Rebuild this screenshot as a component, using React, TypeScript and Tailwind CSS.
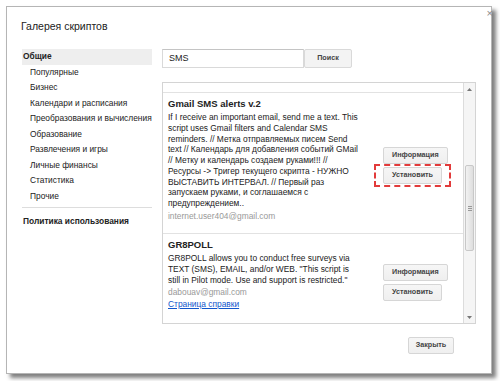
const categories = [
  "Популярные",
  "Бизнес",
  "Календари и расписания",
  "Преобразования и вычисления",
  "Образование",
  "Развлечения и игры",
  "Личные финансы",
  "Статистика",
  "Прочие",
];

const font = "font-['Liberation_Sans',Arial,sans-serif]";

function GrayButton({ label, className = "" }: { label: string; className?: string }) {
  return (
    <div
      className={`h-[17px] px-[8px] flex items-center justify-center rounded-[2px] border border-[#d6d6d6] bg-gradient-to-b from-[#f6f6f6] to-[#efefef] text-[7.2px] font-bold text-[#444] whitespace-nowrap ${className}`}
    >
      {label}
    </div>
  );
}

function Arrow({ down }: { down?: boolean }) {
  return (
    <div className="h-[12px] flex items-center justify-center">
      <svg width="5" height="3" viewBox="0 0 5 3">
        <polygon points={down ? "0,0 5,0 2.5,3" : "0,3 5,3 2.5,0"} fill="#777" />
      </svg>
    </div>
  );
}

export default function App() {
  return (
    <div className={`w-[500px] h-[381px] bg-white overflow-hidden pl-[6px] pt-[6px] ${font} text-[#222]`}>
      <div className="relative w-[486px] h-[368px] bg-white border border-[#b5b5b5] shadow-[4px_4px_4px_rgba(0,0,0,0.5)]">
        <span className="absolute right-[-2px] top-[1px] text-[11px] leading-none text-[#8a8a8a]">×</span>

        <div className="h-[42px] pl-[14px] pt-[13px] text-[10.5px] leading-[12px]">Галерея скриптов</div>

        <div className="flex pl-[15px]">
          {/* sidebar */}
          <div className="w-[130px] text-[8.4px]">
            <div className="h-[15.5px] flex items-center pl-px bg-[#eeeeee] font-bold">Общие</div>
            {categories.map((c) => (
              <div key={c} className="h-[15.5px] flex items-center pl-[8px] whitespace-nowrap">
                {c}
              </div>
            ))}
            <div className="mt-[3px] border-t border-[#dddddd]" />
            <div className="mt-[6px] h-[15.5px] flex items-center pl-px font-bold">Политика использования</div>
          </div>

          {/* main */}
          <div className="ml-[10px] w-[314px]">
            <div className="flex h-[19px]">
              <div className="w-[142px] h-full border border-[#d9d9d9] border-t-[#c4c4c4] flex items-center pl-[6px] text-[9px]">
                SMS
              </div>
              <div className="w-[48px] h-full flex items-center justify-center rounded-[2px] border border-[#d9d9d9] bg-[#f3f3f3] text-[7.2px] font-bold text-[#444]">
                Поиск
              </div>
            </div>

            <div className="mt-[14px] h-[242px] flex border border-[#d4d4d4]">
              <div className="flex-1 overflow-hidden">
                <div className="h-[10px] border-b border-[#e2e2e2]" />

                <div className="flex items-center border-b border-[#e2e2e2]">
                  <div className="w-[220px] pl-[5px] pt-[5px] pb-[11.5px]">
                    <div className="text-[9.5px] font-bold leading-[12px] mb-[2px]">Gmail SMS alerts v.2</div>
                    <div className="text-[8.4px] leading-[10.75px] whitespace-nowrap">
                      If I receive an important email, send me a text. This
                      <br />
                      script uses Gmail filters and Calendar SMS
                      <br />
                      reminders. // Метка отправляемых писем Send
                      <br />
                      text // Календарь для добавления событий GMail
                      <br />
                      // Метку и календарь создаем руками!!! //
                      <br />
                      Ресурсы -&gt; Тригер текущего скрипта - НУЖНО
                      <br />
                      ВЫСТАВИТЬ ИНТЕРВАЛ. // Первый раз
                      <br />
                      запускаем руками, и соглашаемся с
                      <br />
                      предупреждением..
                    </div>
                    <div className="mt-[2px] text-[8.4px] leading-[10.75px] text-[#999]">internet.user404@gmail.com</div>
                  </div>
                  <div className="flex flex-col items-start gap-[3px] pt-[4px]">
                    <GrayButton label="Информация" />
                    <div className="relative">
                      <GrayButton label="Установить" />
                      <div className="absolute -inset-x-[9px] -top-[3px] -bottom-[3px] border-2 border-dashed border-[#e23b3b]" />
                    </div>
                  </div>
                </div>

                <div className="flex items-center">
                  <div className="w-[220px] pl-[5px] pt-[5px] pb-[18px]">
                    <div className="text-[9.5px] font-bold leading-[12px] mb-[2px]">GR8POLL</div>
                    <div className="text-[8.4px] leading-[10.75px] whitespace-nowrap">
                      GR8POLL allows you to conduct free surveys via
                      <br />
                      TEXT (SMS), EMAIL, and/or WEB. "This script is
                      <br />
                      still in Pilot mode. Use and support is restricted."
                    </div>
                    <div className="mt-[2px] text-[8.4px] leading-[10.75px] text-[#999]">dabouav@gmail.com</div>
                    <div className="mt-[1px] text-[8.4px] leading-[10.75px] text-[#1155cc] underline">Страница справки</div>
                  </div>
                  <div className="flex flex-col items-start gap-[3px] pt-[4px]">
                    <GrayButton label="Информация" />
                    <GrayButton label="Установить" />
                  </div>
                </div>
              </div>

              {/* scrollbar */}
              <div className="w-[12px] border-l border-[#dcdcdc] bg-[#f5f5f5] flex flex-col">
                <Arrow />
                <div className="h-[70px]" />
                <div className="h-[86px] mx-px rounded-[2px] border border-[#c8c8c8] bg-gradient-to-r from-[#f2f2f2] to-[#dedede] flex flex-col items-center justify-center gap-px">
                  <div className="h-px w-[4px] bg-[#999]" />
                  <div className="h-px w-[4px] bg-[#999]" />
                  <div className="h-px w-[4px] bg-[#999]" />
                </div>
                <div className="flex-1" />
                <Arrow down />
              </div>
            </div>

            <div className="mt-[13px] flex justify-end pr-[22px]">
              <GrayButton label="Закрыть" className="w-[46px]" />
            </div>
          </div>
        </div>
      </div>
    </div>
  );
}
